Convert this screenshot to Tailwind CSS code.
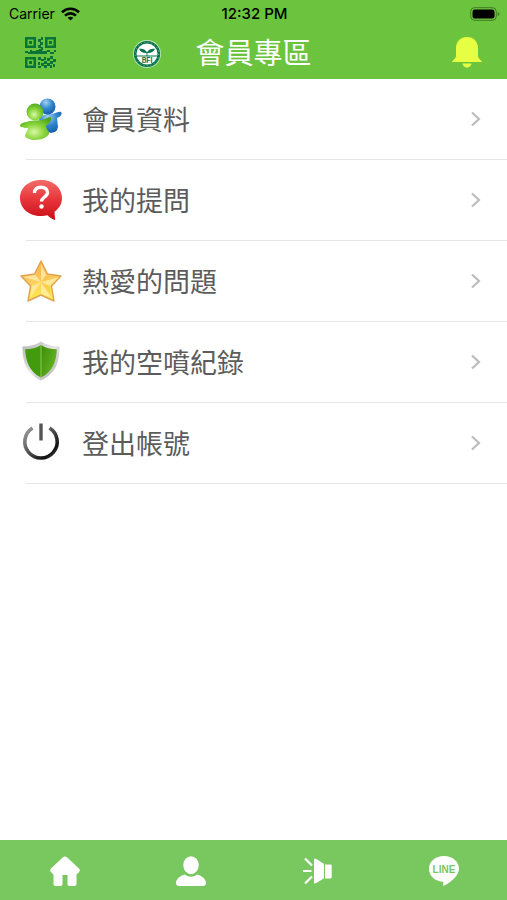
<!DOCTYPE html>
<html lang="zh-Hant">
<head>
  <meta charset="UTF-8">
  <meta name="viewport" content="width=device-width, initial-scale=1">
  <title>會員專區</title>
  <script src="https://cdn.jsdelivr.net/npm/@tailwindcss/browser@4"></script>
</head>
<body class="bg-white min-h-screen flex flex-col font-['Inter','Noto_Sans_CJK_TC',sans-serif]">

  <header class="bg-[#6cc33d]">
    <!-- Status bar -->
    <div class="grid grid-cols-3 items-center h-[27px] pl-[9px] pr-[7px] text-sm text-black">
      <div class="flex items-center gap-1.5">
        <span>Carrier</span>
        <svg class="w-[19px] h-[14px]" viewBox="0 0 19 14" fill="none" stroke="#000" stroke-width="2.6">
          <path d="M1 5.2C5.8.6 13.2.6 18 5.2"/>
          <path d="M4 8.6c3.2-3 7.8-3 11 0"/>
          <path d="M9.500 13.600L6.600 10.700c1.700-1.400 4.100-1.400 5.800 0z" fill="#000" stroke="none"/>
        </svg>
      </div>
      <span class="text-center text-[15px] leading-5 font-medium whitespace-nowrap">12:32 PM</span>
      <svg class="justify-self-end w-[30px] h-[14px]" viewBox="0 0 30 14">
        <rect x=".7" y=".7" width="25.600" height="12.600" rx="3.800" fill="none" stroke="#417a24" stroke-width="1"/>
        <rect x="2.500" y="2.500" width="22" height="9" rx="2.200" fill="#000"/>
        <path d="M27.800 4.800c2 .8 2 3.600 0 4.400z" fill="#417a24"/>
      </svg>
    </div>

    <!-- Title bar -->
    <div class="grid grid-cols-[1fr_auto_1fr] items-center h-[52px] px-6">
      <div class="flex items-center justify-between pr-[34px]">
        <button type="button" aria-label="QR Code">
          <svg class="w-8 h-8" viewBox="0 0 32 32" fill="#087438">
            <path fill-rule="evenodd" d="M1 0h11v11H1zM3.500 2.500v6h6v-6zM21 0h11v11H21zM23.500 2.500v6h6v-6zM1 20h11v11H1zM3.500 22.500v6h6v-6z"/>
            <path d="M5 4h3v3H5zM25 4h3v3h-3zM5 24h3v3H5z"/>
            <path d="M17 0h2v3h-2zM14 2h3v3h-3zM16 5h3v3h-3zM14 8h3v3h-3zM17 10h2v3h-2zM1 14h3v2H1zM4 15h4v2H4zM8 14h4v3H8zM12 13h3v4h-3zM15 12h3v5h-3zM18 14h5v3h-5zM23 13h3v2h-3zM26 15h4v2h-4zM30 13h2v2h-2zM6 13h2v2H6z"/>
            <path d="M14 20h3v3h-3zM17 22h3v2h-3zM20 20h2v3h-2zM23 21h3v3h-3zM26 19h3v3h-3zM29 22h3v3h-3zM14 25h2v3h-2zM17 26h3v3h-3zM20 24h3v3h-3zM23 26h3v3h-3zM26 24h3v3h-3zM14 29h3v2h-3zM20 28h3v3h-3zM26 28h2v3h-2zM29 27h2v3h-2z"/>
          </svg>
        </button>
        <svg class="w-7 h-7 mt-0.5" viewBox="0 0 28 28">
          <circle cx="14" cy="14" r="14" fill="#b9e2b5"/>
          <circle cx="14" cy="14" r="11.800" fill="#fff" stroke="#08734a" stroke-width="2.600"/>
          <circle cx="14" cy="14" r="11.800" fill="none" stroke="#7dbb9e" stroke-width="1" stroke-dasharray="1 2.500"/>
          <path d="M14 13c-.5-3-4-4.500-8-4.300C7.500 12 10.500 13.500 14 13zM14 13c.5-3 4-4.500 8-4.300C20.500 12 17.500 13.500 14 13z" fill="#08734a"/>
          <path d="M13.500 12h1v4h-1zM3.500 15.500h21v1h-21z" fill="#08734a"/>
          <text x="14" y="22.500" text-anchor="middle" font-size="7" font-weight="700" fill="#08734a">BFI</text>
        </svg>
      </div>
      <h1 class="pt-0.5 text-[29px] leading-8 text-white whitespace-nowrap">會員專區</h1>
      <button type="button" aria-label="通知" class="justify-self-end">
        <svg class="w-8 h-8" viewBox="0 0 32 32" fill="#e6ff42">
          <path d="M16 0C9.500 0 5 4.500 5 11v7.500c0 3.500-3.500 4.500-4 6.500h30c-.5-2-4-3-4-6.500V11C27 4.500 22.500 0 16 0z"/>
          <path d="M11.500 26.500h9c-.5 5.500-8.500 5.500-9 0z"/>
        </svg>
      </button>
    </div>
  </header>

  <!-- Menu -->
  <main class="flex-1">
    <ul class="text-[27px] leading-9 text-[#5c5c5c]">
      <li class="flex flex-col h-[81px]">
        <a href="#" class="flex-1 flex items-center pl-5 pr-[26px]">
          <svg class="w-[42px] h-[42px] mr-5" viewBox="0 0 42 42">
            <defs>
              <radialGradient id="blue" cx=".4" cy=".25" r=".8"><stop offset="0" stop-color="#9fd0f2"/><stop offset=".5" stop-color="#3285cc"/><stop offset="1" stop-color="#125aa8"/></radialGradient>
              <radialGradient id="lime" cx=".45" cy=".65" r=".7"><stop offset="0" stop-color="#d9f8a5"/><stop offset=".5" stop-color="#85d336"/><stop offset="1" stop-color="#4ca31c"/></radialGradient>
            </defs>
            <path d="M19 21c2-4 7-5 12-5 4 0 8-3 10-2 2 2-1 5-4 6l1 9c-1 4-2 5-7 6-5-1-10-8-12-14z" fill="url(#blue)"/>
            <circle cx="27.500" cy="8.500" r="8" fill="url(#blue)"/>
            <path d="M0 27c2-3 7-3 10-4 6-1 12 0 17-3 4-2 5-1 4 2-1 3-4 4-5 6 0 4 4 5 3 8-2 3-7 6-14 6-5 0-9-2-10-4 0-3 3-5 3-8-3 0-8 0-8-3z" fill="url(#lime)"/>
            <circle cx="15" cy="14" r="8.500" fill="url(#lime)"/>
          </svg>
          <span class="flex-1 pt-1">會員資料</span>
          <svg class="w-2.5 h-4" viewBox="0 0 10 16" fill="none" stroke="#bcbcbc" stroke-width="2.200"><path d="M1 1.500L8 8l-7 6.500"/></svg>
        </a>
        <div class="ml-[26px] h-px bg-[#e6e6e6]"></div>
      </li>
      <li class="flex flex-col h-[81px]">
        <a href="#" class="flex-1 flex items-center pl-5 pr-[26px]">
          <svg class="w-[42px] h-[42px] mr-5" viewBox="0 0 42 42">
            <defs>
              <linearGradient id="red" x2="0" y2="1"><stop offset="0" stop-color="#f36b68"/><stop offset=".5" stop-color="#e7343a"/><stop offset="1" stop-color="#c90d17"/></linearGradient>
            </defs>
            <path d="M21 1c12 0 21 7.500 21 18 0 6-3 10.500-7.500 13.700.2 3 .3 5 .8 8.300-3.500-1-5.800-2.600-7.800-4.800-2 .5-4 .8-6.500.8C9 37 0 29.500 0 19S9 1 21 1z" fill="url(#red)"/>
            <path d="M14.500 14C14.500 10 17 8.300 21 8.300c4 0 6.500 2 6.500 5.200 0 4.500-6 4.500-6 9" fill="none" stroke="#fff" stroke-width="3.400"/>
            <circle cx="21.500" cy="27.500" r="2.200" fill="#fff"/>
          </svg>
          <span class="flex-1 pt-1">我的提問</span>
          <svg class="w-2.5 h-4" viewBox="0 0 10 16" fill="none" stroke="#bcbcbc" stroke-width="2.200"><path d="M1 1.500L8 8l-7 6.500"/></svg>
        </a>
        <div class="ml-[26px] h-px bg-[#e6e6e6]"></div>
      </li>
      <li class="flex flex-col h-[81px]">
        <a href="#" class="flex-1 flex items-center pl-5 pr-[26px]">
          <svg class="w-[42px] h-[42px] mr-5" viewBox="0 0 42 42">
            <defs>
              <linearGradient id="gold" x2=".3" y2="1"><stop offset="0" stop-color="#f8ad48"/><stop offset=".5" stop-color="#fccb62"/><stop offset="1" stop-color="#ffe94a"/></linearGradient>
            </defs>
            <path d="M21 1l6.500 13L41 16l-9.500 10L34 41l-13-6-13 6 2.500-15L1 16l13.500-2z" fill="url(#gold)" stroke="#e0a250" stroke-width="1.400" stroke-linejoin="round"/>
            <path d="M21 4v18l5-7zM39 17L21 22l8.500 4zM32 38L21 22v12zM10 38l11-16-9 4zM3 17l18 5-5.500-7z" fill="#fff2b8" fill-opacity=".65"/>
            <path d="M21 4v18l-5-7zM39 17L21 22l5-7zM32 38L21 22l8.500 4z" fill="#f7b548" fill-opacity=".35"/>
          </svg>
          <span class="flex-1 pt-1">熱愛的問題</span>
          <svg class="w-2.5 h-4" viewBox="0 0 10 16" fill="none" stroke="#bcbcbc" stroke-width="2.200"><path d="M1 1.500L8 8l-7 6.500"/></svg>
        </a>
        <div class="ml-[26px] h-px bg-[#e6e6e6]"></div>
      </li>
      <li class="flex flex-col h-[81px]">
        <a href="#" class="flex-1 flex items-center pl-5 pr-[26px]">
          <svg class="w-[42px] h-[42px] mr-5" viewBox="0 0 42 42">
            <defs>
              <linearGradient id="steel" x2="1" y2="1"><stop offset="0" stop-color="#b2b2b2"/><stop offset=".5" stop-color="#e6e6e6"/><stop offset="1" stop-color="#a6a6aa"/></linearGradient>
              <linearGradient id="leaf" x2="1" y2=".6"><stop offset="0" stop-color="#3d8d0d"/><stop offset="1" stop-color="#64b420"/></linearGradient>
            </defs>
            <path d="M21 .5C16 4 9.500 5.500 2.500 5.500c0 16 4 27 18.500 34 14.500-7 18.500-18 18.500-34C32.500 5.500 26 4 21 .5z" fill="url(#steel)"/>
            <path d="M21 4C16.500 7 11 8 5.200 8.200 5.700 21 9.500 30.500 21 36.500z" fill="#429a0d"/>
            <path d="M21 4c4.500 3 10 4 15.800 4.200C36.300 21 32.500 30.500 21 36.500z" fill="url(#leaf)"/>
            <path d="M21 4v32" stroke="#8aca50" stroke-width="1"/>
          </svg>
          <span class="flex-1 pt-1">我的空噴紀錄</span>
          <svg class="w-2.5 h-4" viewBox="0 0 10 16" fill="none" stroke="#bcbcbc" stroke-width="2.200"><path d="M1 1.500L8 8l-7 6.500"/></svg>
        </a>
        <div class="ml-[26px] h-px bg-[#e6e6e6]"></div>
      </li>
      <li class="flex flex-col h-[81px]">
        <a href="#" class="flex-1 flex items-center pl-5 pr-[26px]">
          <svg class="w-[42px] h-[42px] mr-5" viewBox="0 0 42 42" fill="none">
            <defs>
              <linearGradient id="power" x2="1" y2="1"><stop offset="0" stop-color="#a0a0a0"/><stop offset=".45" stop-color="#555"/><stop offset=".8" stop-color="#111"/><stop offset="1" stop-color="#555"/></linearGradient>
            </defs>
            <path d="M12.500 6a16.200 16.200 0 1 0 17 0" stroke="url(#power)" stroke-width="3.600"/>
            <path d="M19.300 1.500h3.400v17h-3.400z" fill="#555"/>
          </svg>
          <span class="flex-1 pt-1">登出帳號</span>
          <svg class="w-2.5 h-4" viewBox="0 0 10 16" fill="none" stroke="#bcbcbc" stroke-width="2.200"><path d="M1 1.500L8 8l-7 6.500"/></svg>
        </a>
        <div class="ml-[26px] h-px bg-[#e6e6e6]"></div>
      </li>
    </ul>
  </main>

  <!-- Tab bar -->
  <nav class="grid grid-cols-4 h-[60px] pt-0.5 pl-0.5 bg-[#78c75f]">
    <a href="#" aria-label="首頁" class="flex items-center justify-center">
      <svg class="w-[30px] h-[30px]" viewBox="0 0 30 30" fill="#fff">
        <path d="M13 1.200c1.200-1 2.800-1 4 0L29 12.500c1.300 1.300 1 2.500.2 3.500l-2.700 2.500V28c0 1.200-.8 2-2 2h-5c-1.200 0-2-.8-2-2v-9h-5v9c0 1.200-.8 2-2 2h-5c-1.200 0-2-.8-2-2v-9.500L.8 16C0 15 0 13.800 1 12.500z"/>
      </svg>
    </a>
    <a href="#" aria-label="會員" class="flex items-center justify-center">
      <svg class="w-[30px] h-[30px]" viewBox="0 0 30 30" fill="#fff">
        <ellipse cx="15" cy="9.200" rx="7.700" ry="9"/>
        <path d="M9 18.500c3.500 3 8.500 3 12 0 4.500 1 8 4 9 7.500.5 2.500-1 4-3.500 4h-23C1 30-.5 28.500 0 26c1-3.500 4.500-6.500 9-7.500z"/>
      </svg>
    </a>
    <a href="#" aria-label="公告" class="flex items-center justify-center">
      <svg class="w-[30px] h-[30px]" viewBox="0 0 30 30" fill="#fff">
        <path d="M12 2.500c3 1.300 6 3.500 9 5.300v14.400c-3 1.800-6 4-9 5.300-.8 0-1-.4-1-1v-23c0-.6.2-1 1-1zM22 8.500h5.500c.8 0 1.200.5 1.200 1.200v11.600c0 .7-.4 1.200-1.200 1.200H22z"/>
        <path d="M9 9.500L2 2.500M8.500 15H0M9 20.500L2 27.500" stroke="#fff" stroke-width="2.200"/>
      </svg>
    </a>
    <a href="#" aria-label="LINE" class="flex items-center justify-center">
      <svg class="w-[30px] h-[30px]" viewBox="0 0 30 30" fill="#fff">
        <path d="M15 0c8.500 0 15 5.500 15 12.700C30 19 22.500 26 15.500 29.500c-1.200.6-1.500 0-1.400-1l.3-2.800C6 25.300 0 20 0 12.700 0 5.500 6.500 0 15 0z"/>
        <text x="15" y="16.500" text-anchor="middle" font-size="10" font-family="Liberation Sans, sans-serif" font-weight="700" fill="#78c75f">LINE</text>
      </svg>
    </a>
  </nav>

</body>
</html>
